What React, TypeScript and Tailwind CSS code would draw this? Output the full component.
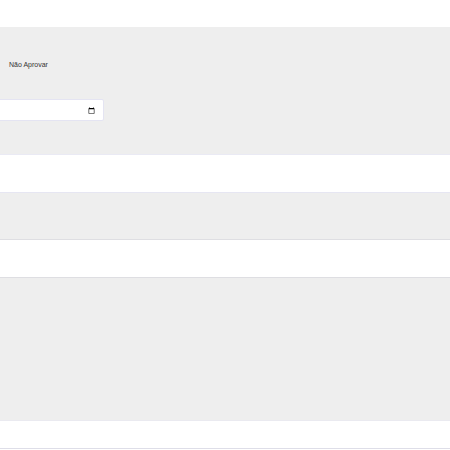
export default function App() {
  return (
    <div className="h-[450px] w-[450px] overflow-hidden bg-white font-['Liberation_Sans',Arial,sans-serif]">
      <div className="h-[27px]" />

      {/* Approval panel */}
      <div className="h-[128px] border-b border-[#eaeaf4] bg-[#eeeeee] pt-[33px]">
        <p className="ml-[9px] text-[7px] leading-[10px] text-[#333]">Não Aprovar</p>
        <input
          type="date"
          className="-ml-[100px] mt-[29px] block h-[22px] w-[204px] rounded-[2px] border border-[#e4e4f2] bg-white pr-[6px] pl-2 text-[7px] text-[#333]"
        />
      </div>

      <div className="h-[38px] border-b border-[#e6e6f2]" />
      <div className="h-[47px] border-b border-[#dedee2] bg-[#eeeeee]" />
      <div className="h-[38px] border-b border-[#dedee2]" />
      <div className="h-[143px] border-b border-[#eaeaf0] bg-[#eeeeee]" />
      <div className="h-[28px] border-b border-[#dedee8]" />
    </div>
  );
}
